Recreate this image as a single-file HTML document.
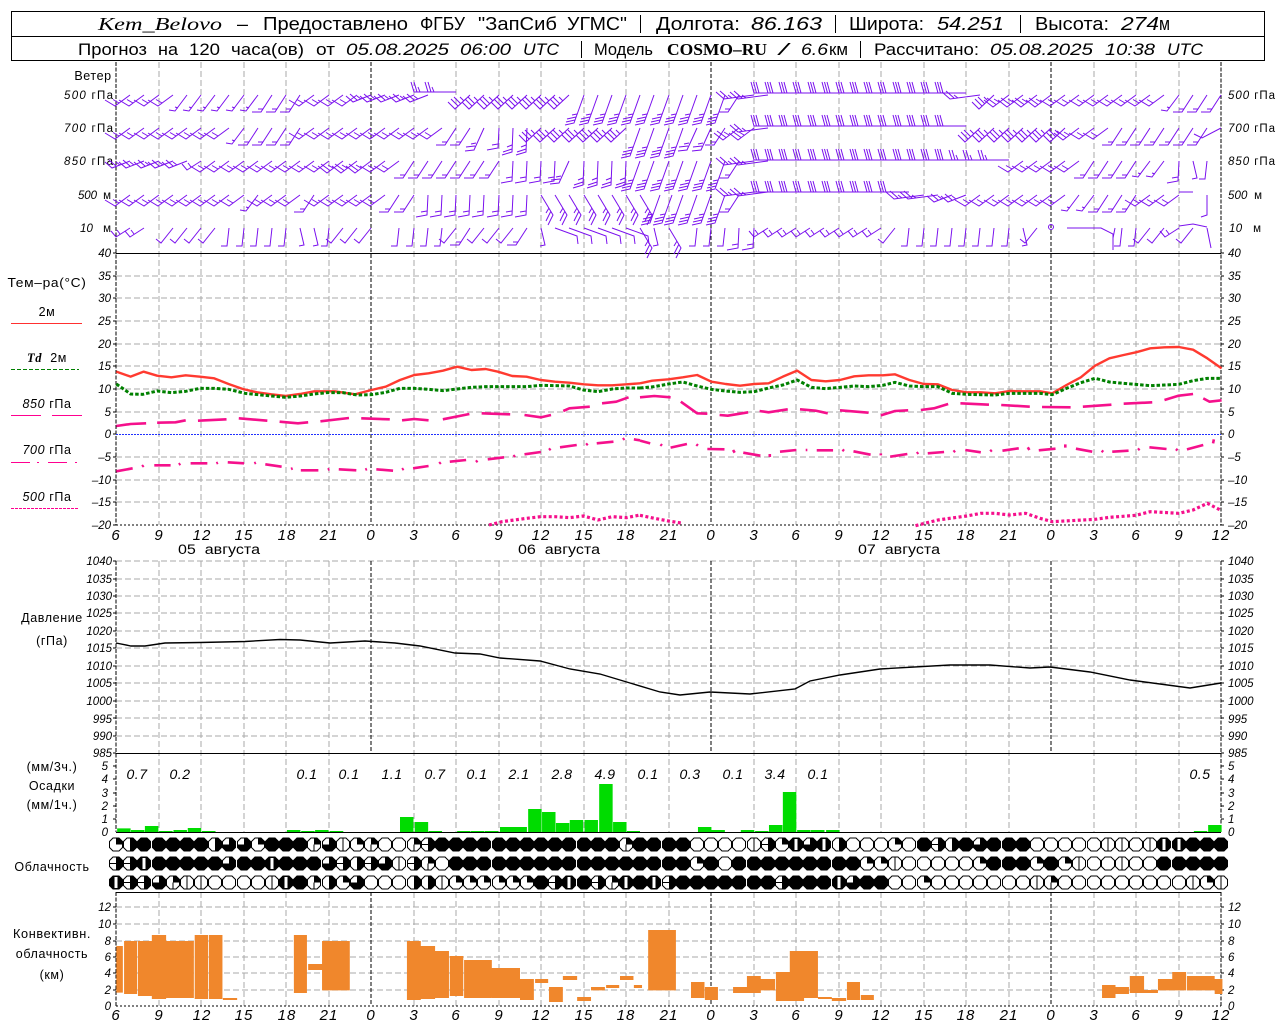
<!DOCTYPE html>
<html><head><meta charset="utf-8"><title>Kem_Belovo</title>
<style>
html,body{margin:0;padding:0;background:#fff}
svg{display:block}
text{font-family:"Liberation Sans","DejaVu Sans",sans-serif;fill:#000;white-space:pre}
.i{font-style:italic}
.se{font-family:"Liberation Serif",serif}
.b{font-family:"Liberation Serif",serif;font-weight:bold}
.h text{font-size:18px}
.h2 text{font-size:16.5px}
.t text{font-size:15px;font-style:italic;text-anchor:middle;letter-spacing:1px}
.l text{font-size:11.5px;font-style:italic;text-anchor:end}
.r text{font-size:11.5px;font-style:italic}
.s text{font-size:12.5px;text-anchor:middle;letter-spacing:.6px}
.v text{font-size:14px;font-style:italic;text-anchor:middle;letter-spacing:.5px}
.w{fill:none;stroke:#7a10ee;stroke-width:1}
.nss{vector-effect:non-scaling-stroke}
</style></head><body>
<svg xmlns="http://www.w3.org/2000/svg" width="1280" height="1024" viewBox="0 0 1280 1024">
<defs>
<path id="o" d="M-3-6.5H3L6.5-3V3L3 6.5H-3L-6.5 3V-3Z"/>
<g id="c0"><use href="#o" fill="#fff" stroke="#000"/></g>
<g id="c1"><use href="#o" fill="#fff" stroke="#000"/><path d="M0-6.5V6.5" stroke="#000"/></g>
<g id="c2"><use href="#o" fill="#fff" stroke="#000"/><path d="M0 0V-6.5H3L6.5-3V0Z"/></g>
<g id="c3"><use href="#o" fill="#fff" stroke="#000"/><path d="M0 0V-6.5H3L6.5-3V0Z"/><path d="M0 0V6.5" stroke="#000"/></g>
<g id="c4"><use href="#o" fill="#fff" stroke="#000"/><path d="M0-6.5H3L6.5-3V3L3 6.5H0Z"/></g>
<g id="c5"><use href="#o" fill="#fff" stroke="#000"/><path d="M0-6.5H3L6.5-3V3L3 6.5H0Z"/><path d="M-6.5 0H0" stroke="#000"/></g>
<g id="c6"><use href="#o" fill="#fff" stroke="#000"/><path d="M0-6.5H3L6.5-3V3L3 6.5H-3L-6.5 3V0H0Z"/></g>
<g id="c7"><use href="#o" stroke="#000"/><rect x="-1.5" y="-5.5" width="3" height="11" fill="#fff"/></g>
<g id="c8"><use href="#o" stroke="#000"/></g>
<path id="a" d="M0 0L-15 11L-25 5M-11 8L-17 4.5"/>
<path id="A" d="M0 0L-16 12L-25 5M-13 9.5L-22 3M-10 7L-15 4"/>
<path id="C" d="M0 0L-15 14L-22 7M-12 11L-19 4M-9 9L-16 2M-6 6L-10 2"/>
<path id="p" d="M0 0L-12 16L-18 15M-9 13L-12 12"/>
<path id="b" d="M0 0L-11 17L-20 17M-9 14L-14 14"/>
<path id="c" d="M0 0L-10 22L-19 23M-9 18L-18 19M-8 15L-13 16"/>
<path id="d" d="M0 0L-10 28L-19 30M-9 25L-18 27M-8 22L-17 24M-7 19L-12 20"/>
<path id="e" d="M0 0L-1 24L-11 27M-1 21L-10 24M-1 17L-6 19"/>
<path id="f" d="M0 0L12 20L7 30M10 16L5 26M8 13L5 18"/>
<path id="W" d="M0 0H-28L-31-11M-25.5 0L-28.5-11M-23 0L-26-11"/>
<path id="Y" d="M0 0H-28L-31-10M-25 0L-28-10M-22 0L-24-5"/>
<path id="g" d="M0 0L-18 7L-25 1M-14 5L-21-1M-10 4L-14 1"/>
<path id="G" d="M0 0L-30 4L-38-3M-26 3L-34-4M-22 3L-26 0"/>
<path id="s" d="M0 0L-2 18L-8 18"/>
<path id="S" d="M0 0L-1 20L-12 22M-1 16L-7 17"/>
<path id="n" d="M0 0L4 17L-1 18"/>
<path id="t" d="M0 0L-12 15L-17 11"/>
<path id="z" d="M0 0L-14 9L-19 3M-10 6L-13 2"/>
<path id="k" d="M0 0L22 8L23 16"/>
<g id="vg"><path d="M0 62V525M0 561V832M0 892V1006"/></g>
</defs>
<rect width="1280" height="1024" fill="#fff"/>

<!-- grid -->
<g fill="none" stroke="#aaa" stroke-dasharray="6 3" shape-rendering="crispEdges">
<use href="#vg" x="159"/><use href="#vg" x="201"/><use href="#vg" x="244"/><use href="#vg" x="286"/><use href="#vg" x="329"/><use href="#vg" x="414"/><use href="#vg" x="456"/><use href="#vg" x="499"/><use href="#vg" x="541"/><use href="#vg" x="584"/><use href="#vg" x="626"/><use href="#vg" x="669"/><use href="#vg" x="754"/><use href="#vg" x="796"/><use href="#vg" x="839"/><use href="#vg" x="881"/><use href="#vg" x="924"/><use href="#vg" x="966"/><use href="#vg" x="1009"/><use href="#vg" x="1094"/><use href="#vg" x="1136"/><use href="#vg" x="1179"/>
<path d="M116 276H1221M116 298H1221M116 321H1221M116 344H1221M116 366H1221M116 389H1221M116 412H1221M116 457H1221M116 480H1221M116 502H1221"/>
<path d="M116 561H1221M116 579H1221M116 596H1221M116 613H1221M116 631H1221M116 648H1221M116 666H1221M116 683H1221M116 701H1221M116 718H1221M116 736H1221"/>
<path d="M116 907H1221M116 924H1221M116 941H1221M116 957H1221M116 973H1221M116 990H1221"/>
</g>
<g fill="none" stroke="#000" stroke-dasharray="4 2" shape-rendering="crispEdges">
<path d="M371 62V525M371 561V753M371 892V1006M711 62V525M711 561V753M711 892V1006M1051 62V525M1051 561V753M1051 892V1006"/>
<path d="M116 62V525M116 561V832M116 892V1006M1221 62V525M1221 561V832M1221 892V1006" stroke-dasharray="4 1.5"/>
<path d="M116 525H1221M116 1006H1221" stroke-dasharray="2 2"/>
</g>
<path d="M116 253.5H1221M116 753.5H1221M116 832.5H1221M116 892.5H1221" stroke="#000" fill="none" shape-rendering="crispEdges"/>
<path d="M116 434.5H1221" stroke="#2030ff" stroke-dasharray="2 1" fill="none" shape-rendering="crispEdges"/>
<path fill="none" stroke="#000" shape-rendering="crispEdges" d="M113 253h3M113 276h3M113 298h3M113 321h3M113 344h3M113 366h3M113 389h3M113 412h3M113 434h3M113 457h3M113 480h3M113 502h3M113 525h3M1221 253h3M1221 276h3M1221 298h3M1221 321h3M1221 344h3M1221 366h3M1221 389h3M1221 412h3M1221 434h3M1221 457h3M1221 480h3M1221 502h3M1221 525h3M113 561h3M113 579h3M113 596h3M113 613h3M113 631h3M113 648h3M113 666h3M113 683h3M113 701h3M113 718h3M113 736h3M113 753h3M1221 561h3M1221 579h3M1221 596h3M1221 613h3M1221 631h3M1221 648h3M1221 666h3M1221 683h3M1221 701h3M1221 718h3M1221 736h3M1221 753h3M113 766h3M113 779h3M113 793h3M113 806h3M113 819h3M1221 766h3M1221 779h3M1221 793h3M1221 806h3M1221 819h3M113 907h3M113 924h3M113 941h3M113 957h3M113 973h3M113 990h3M1221 907h3M1221 924h3M1221 941h3M1221 957h3M1221 973h3M1221 990h3"/>

<!-- header -->
<rect x="11.5" y="11.5" width="1253" height="49" fill="none" stroke="#000" shape-rendering="crispEdges"/>
<path d="M11 36.5H1265" stroke="#000" shape-rendering="crispEdges"/>
<g class="h">
<text x="98" y="30" class="i se" textLength="124" lengthAdjust="spacingAndGlyphs">Kem_Belovo</text>
<text x="237" y="30" textLength="11" lengthAdjust="spacingAndGlyphs">–</text>
<text x="263" y="30" textLength="145" lengthAdjust="spacingAndGlyphs">Предоставлено</text>
<text x="420" y="30" textLength="45" lengthAdjust="spacingAndGlyphs">ФГБУ</text>
<text x="478" y="30" textLength="79" lengthAdjust="spacingAndGlyphs">"ЗапСиб</text>
<text x="567" y="30" textLength="60" lengthAdjust="spacingAndGlyphs">УГМС"</text>
<text x="656" y="30" textLength="84" lengthAdjust="spacingAndGlyphs">Долгота:</text>
<text x="751" y="30" class="i" textLength="71" lengthAdjust="spacingAndGlyphs">86.163</text>
<text x="849" y="30" textLength="75" lengthAdjust="spacingAndGlyphs">Широта:</text>
<text x="937" y="30" class="i" textLength="67" lengthAdjust="spacingAndGlyphs">54.251</text>
<text x="1035" y="30" textLength="74" lengthAdjust="spacingAndGlyphs">Высота:</text>
<text x="1121" y="30" class="i" textLength="38" lengthAdjust="spacingAndGlyphs">274</text>
<text x="1159" y="30" textLength="11" lengthAdjust="spacingAndGlyphs">м</text>
</g>
<path d="M640.5 15V33M835.5 15V33M1020.5 15V33M581.5 41V58M860.5 41V58" stroke="#000" fill="none" shape-rendering="crispEdges"/>
<g class="h2">
<text x="78" y="55" textLength="69" lengthAdjust="spacingAndGlyphs">Прогноз</text>
<text x="158" y="55" textLength="20" lengthAdjust="spacingAndGlyphs">на</text>
<text x="189" y="55" textLength="31" lengthAdjust="spacingAndGlyphs">120</text>
<text x="231" y="55" textLength="73" lengthAdjust="spacingAndGlyphs">часа(ов)</text>
<text x="316" y="55" textLength="19" lengthAdjust="spacingAndGlyphs">от</text>
<text x="346" y="55" class="i" textLength="103" lengthAdjust="spacingAndGlyphs">05.08.2025</text>
<text x="460" y="55" class="i" textLength="51" lengthAdjust="spacingAndGlyphs">06:00</text>
<text x="523" y="55" class="i" textLength="36" lengthAdjust="spacingAndGlyphs">UTC</text>
<text x="594" y="55" textLength="59" lengthAdjust="spacingAndGlyphs">Модель</text>
<text x="667" y="55" class="b" textLength="100" lengthAdjust="spacingAndGlyphs">COSMO–RU</text>
<text x="779" y="55" class="i" textLength="9" lengthAdjust="spacingAndGlyphs">/</text>
<text x="801" y="55" class="i" textLength="27" lengthAdjust="spacingAndGlyphs">6.6</text>
<text x="829" y="55" textLength="19" lengthAdjust="spacingAndGlyphs">км</text>
<text x="874" y="55" textLength="105" lengthAdjust="spacingAndGlyphs">Рассчитано:</text>
<text x="990" y="55" class="i" textLength="103" lengthAdjust="spacingAndGlyphs">05.08.2025</text>
<text x="1105" y="55" class="i" textLength="50" lengthAdjust="spacingAndGlyphs">10:38</text>
<text x="1167" y="55" class="i" textLength="36" lengthAdjust="spacingAndGlyphs">UTC</text>
</g>

<!-- wind labels -->
<g class="s">
<text x="93" y="80">Ветер</text>
</g>
<g>
<text x="64" y="99" font-size="11.5" textLength="49" lengthAdjust="spacing"><tspan class="i">500</tspan> гПа</text>
<text x="64" y="132" font-size="11.5" textLength="49" lengthAdjust="spacing"><tspan class="i">700</tspan> гПа</text>
<text x="64" y="165" font-size="11.5" textLength="49" lengthAdjust="spacing"><tspan class="i">850</tspan> гПа</text>
<text x="78" y="199" font-size="11.5" textLength="33" lengthAdjust="spacing"><tspan class="i">500</tspan>  м</text>
<text x="80" y="232" font-size="11.5" textLength="31" lengthAdjust="spacing"><tspan class="i">10</tspan>   м</text>
<text x="1228" y="99" font-size="11.5" textLength="47" lengthAdjust="spacing"><tspan class="i">500</tspan> гПа</text>
<text x="1228" y="132" font-size="11.5" textLength="47" lengthAdjust="spacing"><tspan class="i">700</tspan> гПа</text>
<text x="1228" y="165" font-size="11.5" textLength="47" lengthAdjust="spacing"><tspan class="i">850</tspan> гПа</text>
<text x="1228" y="199" font-size="11.5" textLength="34" lengthAdjust="spacing"><tspan class="i">500</tspan>  м</text>
<text x="1229" y="232" font-size="11.5" textLength="32" lengthAdjust="spacing"><tspan class="i">10</tspan>   м</text>
</g>

<!-- wind barbs -->
<g class="w">
<g transform="translate(0,95)">
<use href="#a" x="130"/><use href="#a" x="144"/><use href="#a" x="159"/><use href="#a" x="173"/><use href="#p" x="187"/><use href="#p" x="201"/><use href="#p" x="215"/><use href="#p" x="229"/><use href="#p" x="244"/><use href="#p" x="258"/><use href="#b" x="272"/><use href="#b" x="286"/><use href="#b" x="300"/><use href="#a" x="314"/><use href="#a" x="329"/><use href="#a" x="343"/><use href="#a" x="357"/><use href="#g" x="371"/><use href="#g" x="385"/><use href="#g" x="399"/><use href="#g" x="414"/><use href="#g" x="428"/>
<g transform="translate(0,-3)"><use href="#Y" x="442"/><use href="#Y" x="456"/></g>
<use href="#C" x="470"/><use href="#C" x="484"/><use href="#C" x="499"/><use href="#C" x="513"/><use href="#C" x="527"/><use href="#C" x="541"/><use href="#C" x="555"/><use href="#C" x="569"/><use href="#d" x="584"/><use href="#d" x="598"/><use href="#d" x="612"/><use href="#d" x="626"/><use href="#d" x="640"/><use href="#d" x="654"/><use href="#d" x="669"/><use href="#d" x="683"/><use href="#d" x="697"/><use href="#d" x="711"/><use href="#d" x="725"/><use href="#b" x="739"/><use href="#G" x="754"/><use href="#G" x="768"/>
<g transform="translate(0,-2)"><use href="#W" x="782"/><use href="#W" x="796"/><use href="#W" x="810"/><use href="#W" x="824"/><use href="#W" x="839"/><use href="#W" x="853"/><use href="#W" x="867"/><use href="#W" x="881"/><use href="#W" x="895"/><use href="#W" x="909"/><use href="#W" x="924"/><use href="#W" x="938"/><use href="#W" x="952"/><use href="#W" x="966"/></g>
<use href="#G" x="980"/><use href="#C" x="994"/><use href="#A" x="1009"/><use href="#A" x="1023"/><use href="#A" x="1037"/><use href="#A" x="1051"/><use href="#a" x="1065"/><use href="#a" x="1079"/><use href="#a" x="1094"/><use href="#a" x="1108"/><use href="#a" x="1122"/><use href="#a" x="1136"/><use href="#a" x="1150"/><use href="#a" x="1164"/><use href="#p" x="1179"/><use href="#b" x="1193"/><use href="#b" x="1207"/><use href="#b" x="1221"/>
</g>
<g transform="translate(0,128)">
<use href="#a" x="130"/><use href="#a" x="144"/><use href="#a" x="159"/><use href="#a" x="173"/><use href="#a" x="187"/><use href="#a" x="201"/><use href="#a" x="215"/><use href="#a" x="229"/><use href="#p" x="244"/><use href="#b" x="258"/><use href="#b" x="272"/><use href="#b" x="286"/><use href="#b" x="300"/><use href="#a" x="314"/><use href="#a" x="329"/><use href="#a" x="343"/><use href="#a" x="357"/><use href="#a" x="371"/><use href="#a" x="385"/><use href="#a" x="399"/><use href="#a" x="414"/><use href="#a" x="428"/><use href="#a" x="442"/><use href="#b" x="456"/><use href="#b" x="470"/><use href="#c" x="484"/><use href="#S" x="499"/><use href="#e" x="513"/><use href="#e" x="527"/><use href="#C" x="541"/><use href="#C" x="555"/><use href="#C" x="569"/><use href="#C" x="584"/><use href="#C" x="598"/><use href="#C" x="612"/><use href="#C" x="626"/><use href="#d" x="640"/><use href="#d" x="654"/><use href="#d" x="669"/><use href="#d" x="683"/><use href="#c" x="697"/><use href="#c" x="711"/><use href="#b" x="725"/><use href="#A" x="739"/><use href="#A" x="754"/><use href="#G" x="768"/>
<g transform="translate(0,-2)"><use href="#W" x="782"/><use href="#W" x="796"/><use href="#W" x="810"/><use href="#W" x="824"/><use href="#W" x="839"/><use href="#W" x="853"/><use href="#W" x="867"/><use href="#W" x="881"/><use href="#W" x="895"/><use href="#W" x="909"/><use href="#W" x="924"/><use href="#W" x="938"/><use href="#W" x="952"/><use href="#W" x="966"/></g>
<use href="#C" x="980"/><use href="#C" x="994"/><use href="#C" x="1009"/><use href="#C" x="1023"/><use href="#C" x="1037"/><use href="#C" x="1051"/><use href="#C" x="1065"/><use href="#A" x="1079"/><use href="#a" x="1094"/><use href="#a" x="1108"/><use href="#b" x="1122"/><use href="#b" x="1136"/><use href="#b" x="1150"/><use href="#b" x="1164"/><use href="#b" x="1179"/><use href="#b" x="1193"/><use href="#b" x="1207"/><path d="M1221 0L1202 10L1194 6"/>
</g>
<g transform="translate(0,161)">
<use href="#g" x="130"/><use href="#g" x="144"/><use href="#g" x="159"/><use href="#g" x="173"/><use href="#g" x="187"/><use href="#z" x="201"/><use href="#a" x="215"/><use href="#a" x="229"/><use href="#a" x="244"/><use href="#a" x="258"/><use href="#a" x="272"/><use href="#a" x="286"/><use href="#a" x="300"/><use href="#a" x="314"/><use href="#a" x="329"/><use href="#A" x="343"/><use href="#A" x="357"/><use href="#A" x="371"/><use href="#a" x="385"/><use href="#a" x="399"/><use href="#b" x="414"/><use href="#b" x="428"/><use href="#b" x="442"/><use href="#b" x="456"/><use href="#b" x="470"/><use href="#b" x="484"/><use href="#b" x="499"/><use href="#S" x="513"/><use href="#S" x="527"/><use href="#S" x="541"/><use href="#S" x="555"/><use href="#c" x="569"/><use href="#e" x="584"/><use href="#e" x="598"/><use href="#e" x="612"/><use href="#e" x="626"/><use href="#d" x="640"/><use href="#d" x="654"/><use href="#d" x="669"/><use href="#d" x="683"/><use href="#d" x="697"/><use href="#d" x="711"/><use href="#d" x="725"/><use href="#b" x="739"/><use href="#G" x="754"/><use href="#G" x="768"/>
<g transform="translate(0,-1)"><use href="#W" x="782"/><use href="#W" x="796"/><use href="#W" x="810"/><use href="#W" x="824"/><use href="#W" x="839"/><use href="#W" x="853"/><use href="#W" x="867"/><use href="#W" x="881"/><use href="#W" x="895"/><use href="#W" x="909"/><use href="#W" x="924"/><use href="#W" x="938"/><use href="#W" x="952"/><use href="#W" x="966"/><use href="#Y" x="980"/><use href="#Y" x="994"/><use href="#Y" x="1009"/></g>
<use href="#a" x="1023"/><use href="#a" x="1037"/><use href="#a" x="1051"/><use href="#a" x="1065"/><use href="#a" x="1079"/><use href="#b" x="1094"/><use href="#b" x="1108"/><use href="#b" x="1122"/><use href="#b" x="1136"/><use href="#p" x="1150"/><use href="#p" x="1164"/><use href="#S" x="1179"/><use href="#n" x="1193"/><use href="#s" x="1207"/>
</g>
<g transform="translate(0,195)">
<use href="#a" x="130"/><use href="#a" x="144"/><use href="#a" x="159"/><use href="#a" x="173"/><use href="#a" x="187"/><use href="#a" x="201"/><use href="#a" x="215"/><use href="#a" x="229"/><use href="#a" x="244"/><use href="#p" x="258"/><use href="#a" x="272"/><use href="#a" x="286"/><use href="#a" x="300"/><use href="#b" x="314"/><use href="#a" x="329"/><use href="#a" x="343"/><use href="#a" x="357"/><use href="#a" x="371"/><use href="#a" x="385"/><use href="#b" x="399"/><use href="#b" x="414"/><use href="#S" x="428"/><use href="#S" x="442"/><use href="#S" x="456"/><use href="#S" x="470"/><use href="#S" x="484"/><use href="#S" x="499"/><use href="#S" x="513"/><use href="#S" x="527"/><use href="#f" x="541"/><use href="#f" x="555"/><use href="#f" x="569"/><use href="#f" x="584"/><use href="#f" x="598"/><use href="#f" x="612"/><use href="#f" x="626"/><use href="#f" x="640"/><use href="#d" x="660"/><use href="#d" x="672"/><use href="#d" x="683"/><use href="#d" x="697"/><use href="#d" x="711"/><use href="#d" x="725"/><use href="#b" x="739"/>
<g transform="translate(0,-3)"><use href="#G" x="754"/><use href="#G" x="768"/><use href="#W" x="782"/><use href="#W" x="796"/><use href="#W" x="810"/><use href="#W" x="824"/><use href="#W" x="839"/><use href="#W" x="853"/><use href="#W" x="867"/><use href="#W" x="881"/><use href="#W" x="895"/><use href="#W" x="909"/></g>
<use href="#G" x="924"/><use href="#G" x="938"/><use href="#g" x="952"/><use href="#g" x="966"/><use href="#a" x="980"/><use href="#a" x="994"/><use href="#a" x="1009"/><use href="#a" x="1023"/><use href="#a" x="1037"/><use href="#a" x="1051"/><use href="#a" x="1065"/><use href="#p" x="1079"/><use href="#p" x="1094"/><use href="#b" x="1108"/><use href="#b" x="1122"/><use href="#b" x="1136"/><use href="#a" x="1150"/><use href="#a" x="1164"/><use href="#a" x="1179"/>
<path d="M1193-3H1179M1207 0V20L1201 22"/>
</g>
<g transform="translate(0,228)">
<use href="#z" x="130"/><use href="#z" x="144"/><use href="#t" x="173"/><use href="#t" x="187"/><use href="#t" x="201"/><use href="#t" x="215"/><use href="#s" x="229"/><use href="#s" x="244"/><use href="#s" x="258"/><use href="#s" x="272"/><use href="#s" x="286"/><use href="#n" x="300"/><use href="#n" x="314"/><use href="#s" x="329"/><use href="#t" x="343"/><use href="#t" x="357"/><use href="#t" x="371"/><use href="#s" x="399"/><use href="#s" x="414"/><use href="#s" x="428"/><use href="#s" x="442"/><use href="#t" x="456"/><use href="#b" x="470"/><use href="#t" x="484"/><use href="#t" x="499"/><use href="#t" x="513"/><use href="#b" x="527"/><use href="#n" x="541"/><use href="#k" x="555"/><use href="#k" x="569"/><use href="#k" x="584"/><use href="#k" x="598"/><use href="#k" x="612"/><use href="#k" x="626"/><use href="#f" x="640"/><use href="#n" x="654"/><use href="#f" x="669"/><use href="#s" x="697"/><use href="#s" x="711"/><use href="#s" x="725"/><use href="#S" x="739"/><use href="#S" x="754"/><use href="#z" x="768"/><use href="#z" x="782"/><use href="#z" x="796"/><use href="#z" x="810"/><use href="#z" x="824"/><use href="#z" x="839"/><use href="#z" x="853"/><use href="#z" x="867"/><use href="#z" x="881"/><use href="#t" x="895"/><use href="#s" x="909"/><use href="#s" x="924"/><use href="#s" x="938"/><use href="#s" x="952"/><use href="#s" x="966"/><use href="#s" x="980"/><use href="#s" x="994"/><use href="#s" x="1009"/><use href="#n" x="1023"/><use href="#t" x="1037"/>
<circle cx="1051" cy="-1" r="2.5"/><path d="M1067 0H1101L1113 6V22M1115 0L1113 10"/>
<use href="#s" x="1122"/><use href="#s" x="1136"/><use href="#t" x="1150"/><use href="#t" x="1164"/><use href="#z" x="1179"/><use href="#t" x="1193"/><path d="M1179-2L1193-4L1207-1M1207 0L1211 20"/>
</g>
</g>

<!-- temp labels -->
<g class="s">
<text x="47" y="287" font-size="13" textLength="79" lengthAdjust="spacingAndGlyphs">Тем–ра(°C)</text>
<text x="47" y="316">2м</text>
<text x="47" y="362"><tspan class="i b">Td</tspan>  2м</text>
<text x="47" y="408"><tspan class="i">850</tspan> гПа</text>
<text x="47" y="454"><tspan class="i">700</tspan> гПа</text>
<text x="47" y="501"><tspan class="i">500</tspan> гПа</text>
</g>
<path d="M11 323.5H82" stroke="#ff3030" fill="none" shape-rendering="crispEdges"/>
<path d="M11 369.5H79" stroke="#008000" stroke-dasharray="4 2" fill="none" shape-rendering="crispEdges"/>
<path d="M11 415.5H41M52 415.5H82" stroke="#ff0090" fill="none" shape-rendering="crispEdges"/>
<path d="M11 462.5H30M37 462.5H39M48 462.5H67M75 462.5H77" stroke="#ff0090" fill="none" shape-rendering="crispEdges"/>
<path d="M11 508.5H78" stroke="#ff0090" stroke-dasharray="3 1" fill="none" shape-rendering="crispEdges"/>

<!-- temp curves -->
<g fill="none" stroke-linejoin="round">
<g transform="translate(0,260) scale(.40816,.33333)">
<path class="nss" stroke="#ff3a30" stroke-width="2.4" d="M285 335L320 350L352 335L385 347L420 352L455 346L490 350L525 355L560 372L595 387L630 397L665 403L700 408L735 402L770 394L820 394L870 403L910 390L945 380L980 360L1015 345L1050 340L1085 332L1120 320L1155 330L1190 327L1220 335L1255 348L1290 350L1325 360L1360 365L1395 368L1430 373L1465 376L1500 376L1535 373L1568 370"/>
<path class="nss" stroke="#008000" stroke-width="3" stroke-dasharray="3.5 2" d="M285 372L320 402L350 403L385 393L420 398L455 394L490 385L525 385L560 388L600 400L640 405L700 412L735 408L770 402L800 398L840 398L875 405L910 404L945 397L980 385L1015 385L1050 388L1085 392L1120 387L1155 382L1190 380L1290 380L1325 376L1395 378L1430 390L1465 395L1500 387L1535 384L1568 384"/>
<path class="nss" stroke="#f5108c" stroke-width="2.6" d="M285 498L320 492L358 490M385 488L430 487L455 481M485 482L555 478M585 475L655 482M685 485L730 490L755 487M785 484L855 474M885 475L955 478M985 481L1015 477L1050 481M1085 478L1150 462M1180 460L1250 463M1285 465L1325 472L1350 465M1380 453L1395 445L1445 440M1475 430L1510 425L1540 412"/>
<path class="nss" stroke="#f5108c" stroke-width="2.6" d="M285 634L325 625M348 620L352 616M378 616L418 616M438 614L442 611M467 610L508 610M530 610L534 608M558 607L598 610M623 610L627 608M650 613L690 620M713 627L717 625M737 631L780 631M803 629L807 627M830 628L873 631M895 629L899 627M922 628L963 632M985 629L989 626M1012 625L1050 618M1076 611L1080 607M1102 605L1142 600M1166 606L1170 602M1195 598L1235 592M1258 590L1262 586M1285 583L1325 576M1345 570L1349 566M1372 562L1413 555M1436 555L1440 551M1462 550L1503 545M1526 539L1530 535M1553 538L1568 541"/>
<path class="nss" stroke="#f5108c" stroke-width="3.2" stroke-dasharray="3 2.5" d="M1198 795L1230 785L1290 775L1325 770L1360 770L1395 773L1430 768L1465 780L1500 770L1535 773L1568 765"/>
</g>
<g transform="translate(640,260) scale(.40816,.33333)">
<path class="nss" stroke="#ff3a30" stroke-width="2.4" d="M0 370L30 362L70 358L105 352L140 345L175 365L210 372L245 377L280 372L315 370L350 350L385 332L420 360L455 364L490 360L525 349L560 346L595 346L625 343L660 360L695 372L730 373L765 390L800 397L835 397L870 400L905 393L940 394L980 394L1010 400L1045 375L1080 352L1115 317L1150 295L1185 285L1215 277L1250 265L1285 262L1320 261L1355 269L1390 295L1425 325"/>
<path class="nss" stroke="#008000" stroke-width="3" stroke-dasharray="3.5 2" d="M0 384L35 380L70 372L105 366L140 378L175 388L210 393L245 397L280 395L315 384L350 375L385 360L420 382L455 386L490 382L525 378L560 380L595 376L625 367L660 378L695 380L730 380L765 400L800 403L870 405L905 400L980 400L1010 404L1045 385L1080 368L1115 355L1150 366L1185 370L1250 377L1285 375L1320 373L1355 362L1390 355L1425 355"/>
<path class="nss" stroke="#f5108c" stroke-width="2.6" d="M0 412L35 408L75 412M100 425L140 460L165 461M195 465L215 467L265 457M293 453L315 457L362 448M392 448L430 452L460 460M490 451L560 458M590 466L625 453L657 451M688 450L720 445L755 432M785 430L855 434M885 435L955 440M985 441L1055 442M1085 440L1155 434M1185 431L1255 427M1285 420L1320 407L1355 402M1380 415L1395 425L1425 421"/>
<path class="nss" stroke="#f5108c" stroke-width="2.6" d="M0 542L25 550M50 553L54 557M75 563L115 552M138 553L142 557M165 567L207 568M228 570L232 578M253 578L295 587M318 582L318 591M343 575L383 570M406 570L410 570M433 571L473 571M496 569L500 573M523 574L565 584M590 580L590 586M613 590L655 582M678 581L682 577M705 580L745 576M768 576L772 572M797 570L835 577M858 574L862 570M888 572L928 565M950 562L954 570M977 571L1018 566M1042 553L1042 563M1068 566L1108 575M1131 572L1135 576M1157 575L1197 572M1220 570L1224 566M1248 562L1290 567M1313 567L1317 571M1340 568L1380 555M1404 550L1406 538"/>
<path class="nss" stroke="#f5108c" stroke-width="3.2" stroke-dasharray="3 2.5" d="M0 766L35 775L70 783L105 790M675 797L730 780L800 768L835 760L870 760L905 765L945 760L980 775L1010 785L1115 778L1150 772L1215 766L1250 755L1320 760L1355 750L1390 730L1425 752"/>
</g>
</g>

<!-- y labels temp -->
<g class="l">
<text x="111" y="257">40</text><text x="111" y="280">35</text><text x="111" y="302">30</text><text x="111" y="325">25</text><text x="111" y="348">20</text><text x="111" y="370">15</text><text x="111" y="393">10</text><text x="111" y="416">5</text><text x="111" y="438">0</text><text x="111" y="461">–5</text><text x="111" y="484">–10</text><text x="111" y="506">–15</text><text x="111" y="529">–20</text>
<text x="112" y="565">1040</text><text x="112" y="583">1035</text><text x="112" y="600">1030</text><text x="112" y="617">1025</text><text x="112" y="635">1020</text><text x="112" y="652">1015</text><text x="112" y="670">1010</text><text x="112" y="687">1005</text><text x="112" y="705">1000</text><text x="112" y="723">995</text><text x="112" y="740">990</text><text x="112" y="757">985</text>
<text x="108" y="770">5</text><text x="108" y="783">4</text><text x="108" y="797">3</text><text x="108" y="810">2</text><text x="108" y="823">1</text><text x="108" y="836">0</text>
<text x="111" y="911">12</text><text x="111" y="928">10</text><text x="111" y="945">8</text><text x="111" y="961">6</text><text x="111" y="977">4</text><text x="111" y="994">2</text><text x="111" y="1010">0</text>
</g>
<g class="r">
<text x="1228" y="257">40</text><text x="1228" y="280">35</text><text x="1228" y="302">30</text><text x="1228" y="325">25</text><text x="1228" y="348">20</text><text x="1228" y="370">15</text><text x="1228" y="393">10</text><text x="1228" y="416">5</text><text x="1228" y="438">0</text><text x="1228" y="461">–5</text><text x="1228" y="484">–10</text><text x="1228" y="506">–15</text><text x="1228" y="529">–20</text>
<text x="1228" y="565">1040</text><text x="1228" y="583">1035</text><text x="1228" y="600">1030</text><text x="1228" y="617">1025</text><text x="1228" y="635">1020</text><text x="1228" y="652">1015</text><text x="1228" y="670">1010</text><text x="1228" y="687">1005</text><text x="1228" y="705">1000</text><text x="1228" y="723">995</text><text x="1228" y="740">990</text><text x="1228" y="757">985</text>
<text x="1228" y="770">5</text><text x="1228" y="783">4</text><text x="1228" y="797">3</text><text x="1228" y="810">2</text><text x="1228" y="823">1</text><text x="1228" y="836">0</text>
<text x="1228" y="911">12</text><text x="1228" y="928">10</text><text x="1228" y="945">8</text><text x="1228" y="961">6</text><text x="1228" y="977">4</text><text x="1228" y="994">2</text><text x="1228" y="1010">0</text>
</g>

<!-- hour labels -->
<g class="t">
<text x="116" y="540">6</text><text x="159" y="540">9</text><text x="202" y="540">12</text><text x="244" y="540">15</text><text x="287" y="540">18</text><text x="329" y="540">21</text><text x="371" y="540">0</text><text x="414" y="540">3</text><text x="456" y="540">6</text><text x="499" y="540">9</text><text x="541" y="540">12</text><text x="584" y="540">15</text><text x="626" y="540">18</text><text x="669" y="540">21</text><text x="711" y="540">0</text><text x="754" y="540">3</text><text x="796" y="540">6</text><text x="839" y="540">9</text><text x="881" y="540">12</text><text x="924" y="540">15</text><text x="966" y="540">18</text><text x="1009" y="540">21</text><text x="1051" y="540">0</text><text x="1094" y="540">3</text><text x="1136" y="540">6</text><text x="1179" y="540">9</text><text x="1221" y="540">12</text>
<text x="116" y="1020">6</text><text x="159" y="1020">9</text><text x="202" y="1020">12</text><text x="244" y="1020">15</text><text x="287" y="1020">18</text><text x="329" y="1020">21</text><text x="371" y="1020">0</text><text x="414" y="1020">3</text><text x="456" y="1020">6</text><text x="499" y="1020">9</text><text x="541" y="1020">12</text><text x="584" y="1020">15</text><text x="626" y="1020">18</text><text x="669" y="1020">21</text><text x="711" y="1020">0</text><text x="754" y="1020">3</text><text x="796" y="1020">6</text><text x="839" y="1020">9</text><text x="881" y="1020">12</text><text x="924" y="1020">15</text><text x="966" y="1020">18</text><text x="1009" y="1020">21</text><text x="1051" y="1020">0</text><text x="1094" y="1020">3</text><text x="1136" y="1020">6</text><text x="1179" y="1020">9</text><text x="1221" y="1020">12</text>
</g>
<text x="178" y="554" font-size="13.5" textLength="82" lengthAdjust="spacingAndGlyphs">05  августа</text>
<text x="518" y="554" font-size="13.5" textLength="82" lengthAdjust="spacingAndGlyphs">06  августа</text>
<text x="858" y="554" font-size="13.5" textLength="82" lengthAdjust="spacingAndGlyphs">07  августа</text>

<!-- pressure -->
<g class="s">
<text x="52" y="622">Давление</text>
<text x="52" y="645">(гПа)</text>
<text x="52" y="771">(мм/3ч.)</text>
<text x="52" y="790">Осадки</text>
<text x="52" y="809">(мм/1ч.)</text>
<text x="52" y="871">Облачность</text>
<text x="52" y="938" textLength="78" lengthAdjust="spacingAndGlyphs">Конвективн.</text>
<text x="52" y="958">облачность</text>
<text x="52" y="979">(км)</text>
</g>
<path fill="none" stroke="#000" stroke-width="1.4" d="M116 643L131 646L145 646L165 643L200 642.5L245 641.5L280 639.5L300 640L330 643L365 641L395 643L420 646L455 653L480 654L500 658L540 661L570 669L600 674L630 683L660 692L680 695L710 692L750 694L795 689L810 681L840 675L880 669L950 665L990 665L1030 668L1050 667L1090 672L1130 680L1190 688L1221 683"/>

<!-- precip -->
<g class="v">
<text x="137" y="779">0.7</text><text x="180" y="779">0.2</text><text x="307" y="779">0.1</text><text x="349" y="779">0.1</text><text x="392" y="779">1.1</text><text x="435" y="779">0.7</text><text x="477" y="779">0.1</text><text x="519" y="779">2.1</text><text x="562" y="779">2.8</text><text x="605" y="779">4.9</text><text x="648" y="779">0.1</text><text x="690" y="779">0.3</text><text x="733" y="779">0.1</text><text x="775" y="779">3.4</text><text x="818" y="779">0.1</text><text x="1200" y="779">0.5</text>
</g>
<g fill="#00dc00" transform="translate(0,750) scale(.40816,.33333)">
<path d="M287 235h33V246h-33zM321 240h33V246h-33zM355 228h33V246h-33zM390 243h33V246h-33zM425 240h33V246h-33zM460 234h33V246h-33zM495 243h33V246h-33zM703 240h33V246h-33zM738 243h33V246h-33zM772 240h33V246h-33zM808 243h33V246h-33zM980 201h33V246h-33zM1016 216h33V246h-33zM1050 243h33V246h-33zM1120 243h33V246h-33zM1154 243h33V246h-33zM1188 243h33V246h-33zM1225 231h33V246h-33zM1258 231h33V246h-33zM1294 177h33V246h-33zM1328 186h33V246h-33zM1362 219h33V246h-33zM1396 210h33V246h-33zM1432 210h33V246h-33zM1468 102h33V246h-33zM1502 216h33V246h-33zM1536 243h32V246h-32z"/>
<path transform="translate(1568,0)" d="M142 231h33V246h-33zM175 240h33V246h-33zM247 240h33V246h-33zM282 243h33V246h-33zM316 225h33V246h-33zM350 126h33V246h-33zM385 240h33V246h-33zM419 240h33V246h-33zM456 240h33V246h-33zM1357 243h33V246h-33zM1392 225h33V246h-33z"/>
</g>

<!-- convective -->
<g fill="#f0872c" transform="translate(0,750) scale(.40816,.33333)">
<path d="M285 588H301V728H285zM304 573H336V732H304zM338 573H372V738H338zM372 555H407V747H372zM407 573H475V744H407zM477 555H510V747H477zM512 555H545V747H512zM546 744H581V750H546zM720 555H752V729H720zM755 642H790V660H755zM789 573H857V721H789zM997 573H1031V750H997zM1031 588H1066V747H1031zM1066 603H1100V744H1066zM1102 618H1135V738H1102zM1137 630H1205V744H1137zM1205 654H1274V744H1205zM1274 687H1308V750H1274zM1311 687H1343V699H1311zM1345 711H1379V756H1345zM1379 678H1414V690H1379zM1414 741H1448V753H1414zM1448 711H1482V721H1448zM1485 705H1517V714H1485zM1519 678H1552V690H1519zM1553 705H1568V714H1553z"/>
<path transform="translate(1568,0)" d="M0 705H5V714H0zM20 540H88V721H20zM125 696H158V744H125zM159 711H191V750H159zM228 711H262V729H228zM262 678H296V729H262zM296 687H331V721H296zM333 666H367V753H333zM367 603H402V753H367zM402 603H436V744H402zM436 741H470V747H436zM470 744H505V753H470zM507 696H539V750H507zM541 735H573V750H541zM1132 705H1165V744H1132zM1165 711H1198V732H1165zM1200 678H1235V729H1200zM1235 720H1269V729H1235zM1269 687H1304V721H1269zM1304 666H1338V721H1304zM1340 678H1373V721H1340zM1373 678H1408V721H1373zM1408 687H1427V732H1408z"/>
</g>

<!-- clouds -->
<g transform="translate(0,844.5)">
<use href="#c2" x="116"/><use href="#c4" x="130"/><use href="#c8" x="144"/><use href="#c8" x="159"/><use href="#c8" x="173"/><use href="#c8" x="187"/><use href="#c8" x="201"/><use href="#c4" x="215"/><use href="#c6" x="229"/><use href="#c6" x="244"/><use href="#c2" x="258"/><use href="#c8" x="272"/><use href="#c8" x="286"/><use href="#c8" x="300"/><use href="#c3" x="314"/><use href="#c6" x="329"/><use href="#c1" x="343"/><use href="#c2" x="357"/><use href="#c3" x="371"/><use href="#c0" x="385"/><use href="#c0" x="399"/><use href="#c3" x="414"/><use href="#c5" x="428"/><use href="#c8" x="442"/><use href="#c8" x="456"/><use href="#c8" x="470"/><use href="#c8" x="484"/><use href="#c8" x="499"/><use href="#c8" x="513"/><use href="#c8" x="527"/><use href="#c8" x="541"/><use href="#c8" x="555"/><use href="#c8" x="569"/><use href="#c8" x="584"/><use href="#c8" x="598"/><use href="#c8" x="612"/><use href="#c3" x="626"/><use href="#c8" x="640"/><use href="#c8" x="654"/><use href="#c8" x="669"/><use href="#c8" x="683"/><use href="#c0" x="697"/><use href="#c0" x="711"/><use href="#c0" x="725"/><use href="#c0" x="739"/><use href="#c1" x="754"/><use href="#c5" x="768"/><use href="#c2" x="782"/><use href="#c7" x="796"/><use href="#c6" x="810"/><use href="#c7" x="824"/><use href="#c4" x="839"/><use href="#c0" x="853"/><use href="#c0" x="867"/><use href="#c0" x="881"/><use href="#c2" x="895"/><use href="#c0" x="909"/><use href="#c8" x="924"/><use href="#c5" x="938"/><use href="#c4" x="952"/><use href="#c8" x="966"/><use href="#c6" x="980"/><use href="#c8" x="994"/><use href="#c8" x="1009"/><use href="#c8" x="1023"/><use href="#c0" x="1037"/><use href="#c0" x="1051"/><use href="#c0" x="1065"/><use href="#c0" x="1079"/><use href="#c0" x="1094"/><use href="#c1" x="1108"/><use href="#c1" x="1122"/><use href="#c0" x="1136"/><use href="#c1" x="1150"/><use href="#c7" x="1164"/><use href="#c7" x="1179"/><use href="#c8" x="1193"/><use href="#c8" x="1207"/><use href="#c8" x="1221"/>
</g>
<g transform="translate(0,863.5)">
<use href="#c5" x="116"/><use href="#c5" x="130"/><use href="#c7" x="144"/><use href="#c8" x="159"/><use href="#c8" x="173"/><use href="#c8" x="187"/><use href="#c8" x="201"/><use href="#c8" x="215"/><use href="#c6" x="229"/><use href="#c8" x="244"/><use href="#c8" x="258"/><use href="#c7" x="272"/><use href="#c8" x="286"/><use href="#c8" x="300"/><use href="#c8" x="314"/><use href="#c6" x="329"/><use href="#c5" x="343"/><use href="#c4" x="357"/><use href="#c5" x="371"/><use href="#c6" x="385"/><use href="#c1" x="399"/><use href="#c5" x="414"/><use href="#c3" x="428"/><use href="#c0" x="442"/><use href="#c8" x="456"/><use href="#c8" x="470"/><use href="#c8" x="484"/><use href="#c8" x="499"/><use href="#c8" x="513"/><use href="#c8" x="527"/><use href="#c8" x="541"/><use href="#c8" x="555"/><use href="#c8" x="569"/><use href="#c8" x="584"/><use href="#c8" x="598"/><use href="#c8" x="612"/><use href="#c8" x="626"/><use href="#c8" x="640"/><use href="#c8" x="654"/><use href="#c8" x="669"/><use href="#c8" x="683"/><use href="#c2" x="697"/><use href="#c8" x="711"/><use href="#c0" x="725"/><use href="#c8" x="739"/><use href="#c8" x="754"/><use href="#c8" x="768"/><use href="#c8" x="782"/><use href="#c8" x="796"/><use href="#c8" x="810"/><use href="#c8" x="824"/><use href="#c8" x="839"/><use href="#c8" x="853"/><use href="#c2" x="867"/><use href="#c2" x="881"/><use href="#c1" x="895"/><use href="#c0" x="909"/><use href="#c0" x="924"/><use href="#c0" x="938"/><use href="#c0" x="952"/><use href="#c0" x="966"/><use href="#c2" x="980"/><use href="#c8" x="994"/><use href="#c8" x="1009"/><use href="#c8" x="1023"/><use href="#c2" x="1037"/><use href="#c8" x="1051"/><use href="#c2" x="1065"/><use href="#c1" x="1079"/><use href="#c0" x="1094"/><use href="#c0" x="1108"/><use href="#c1" x="1122"/><use href="#c0" x="1136"/><use href="#c0" x="1150"/><use href="#c8" x="1164"/><use href="#c8" x="1179"/><use href="#c8" x="1193"/><use href="#c8" x="1207"/><use href="#c8" x="1221"/>
</g>
<g transform="translate(0,882.5)">
<use href="#c7" x="116"/><use href="#c5" x="130"/><use href="#c5" x="144"/><use href="#c6" x="159"/><use href="#c3" x="173"/><use href="#c1" x="187"/><use href="#c1" x="201"/><use href="#c0" x="215"/><use href="#c0" x="229"/><use href="#c0" x="244"/><use href="#c0" x="258"/><use href="#c1" x="272"/><use href="#c7" x="286"/><use href="#c8" x="300"/><use href="#c3" x="314"/><use href="#c4" x="329"/><use href="#c2" x="343"/><use href="#c6" x="357"/><use href="#c0" x="371"/><use href="#c0" x="385"/><use href="#c0" x="399"/><use href="#c4" x="414"/><use href="#c4" x="428"/><use href="#c1" x="442"/><use href="#c2" x="456"/><use href="#c2" x="470"/><use href="#c2" x="484"/><use href="#c2" x="499"/><use href="#c2" x="513"/><use href="#c2" x="527"/><use href="#c8" x="541"/><use href="#c5" x="555"/><use href="#c7" x="569"/><use href="#c8" x="584"/><use href="#c5" x="598"/><use href="#c3" x="612"/><use href="#c7" x="626"/><use href="#c8" x="640"/><use href="#c7" x="654"/><use href="#c5" x="669"/><use href="#c8" x="683"/><use href="#c8" x="697"/><use href="#c8" x="711"/><use href="#c8" x="725"/><use href="#c8" x="739"/><use href="#c8" x="754"/><use href="#c8" x="768"/><use href="#c5" x="782"/><use href="#c8" x="796"/><use href="#c8" x="810"/><use href="#c8" x="824"/><use href="#c7" x="839"/><use href="#c6" x="853"/><use href="#c8" x="867"/><use href="#c8" x="881"/><use href="#c0" x="895"/><use href="#c0" x="909"/><use href="#c2" x="924"/><use href="#c0" x="938"/><use href="#c0" x="952"/><use href="#c0" x="966"/><use href="#c0" x="980"/><use href="#c0" x="994"/><use href="#c0" x="1009"/><use href="#c0" x="1023"/><use href="#c1" x="1037"/><use href="#c3" x="1051"/><use href="#c0" x="1065"/><use href="#c0" x="1079"/><use href="#c0" x="1094"/><use href="#c0" x="1108"/><use href="#c0" x="1122"/><use href="#c0" x="1136"/><use href="#c0" x="1150"/><use href="#c0" x="1164"/><use href="#c0" x="1179"/><use href="#c1" x="1193"/><use href="#c2" x="1207"/><use href="#c1" x="1221"/>
</g>
</svg>
</body></html>
